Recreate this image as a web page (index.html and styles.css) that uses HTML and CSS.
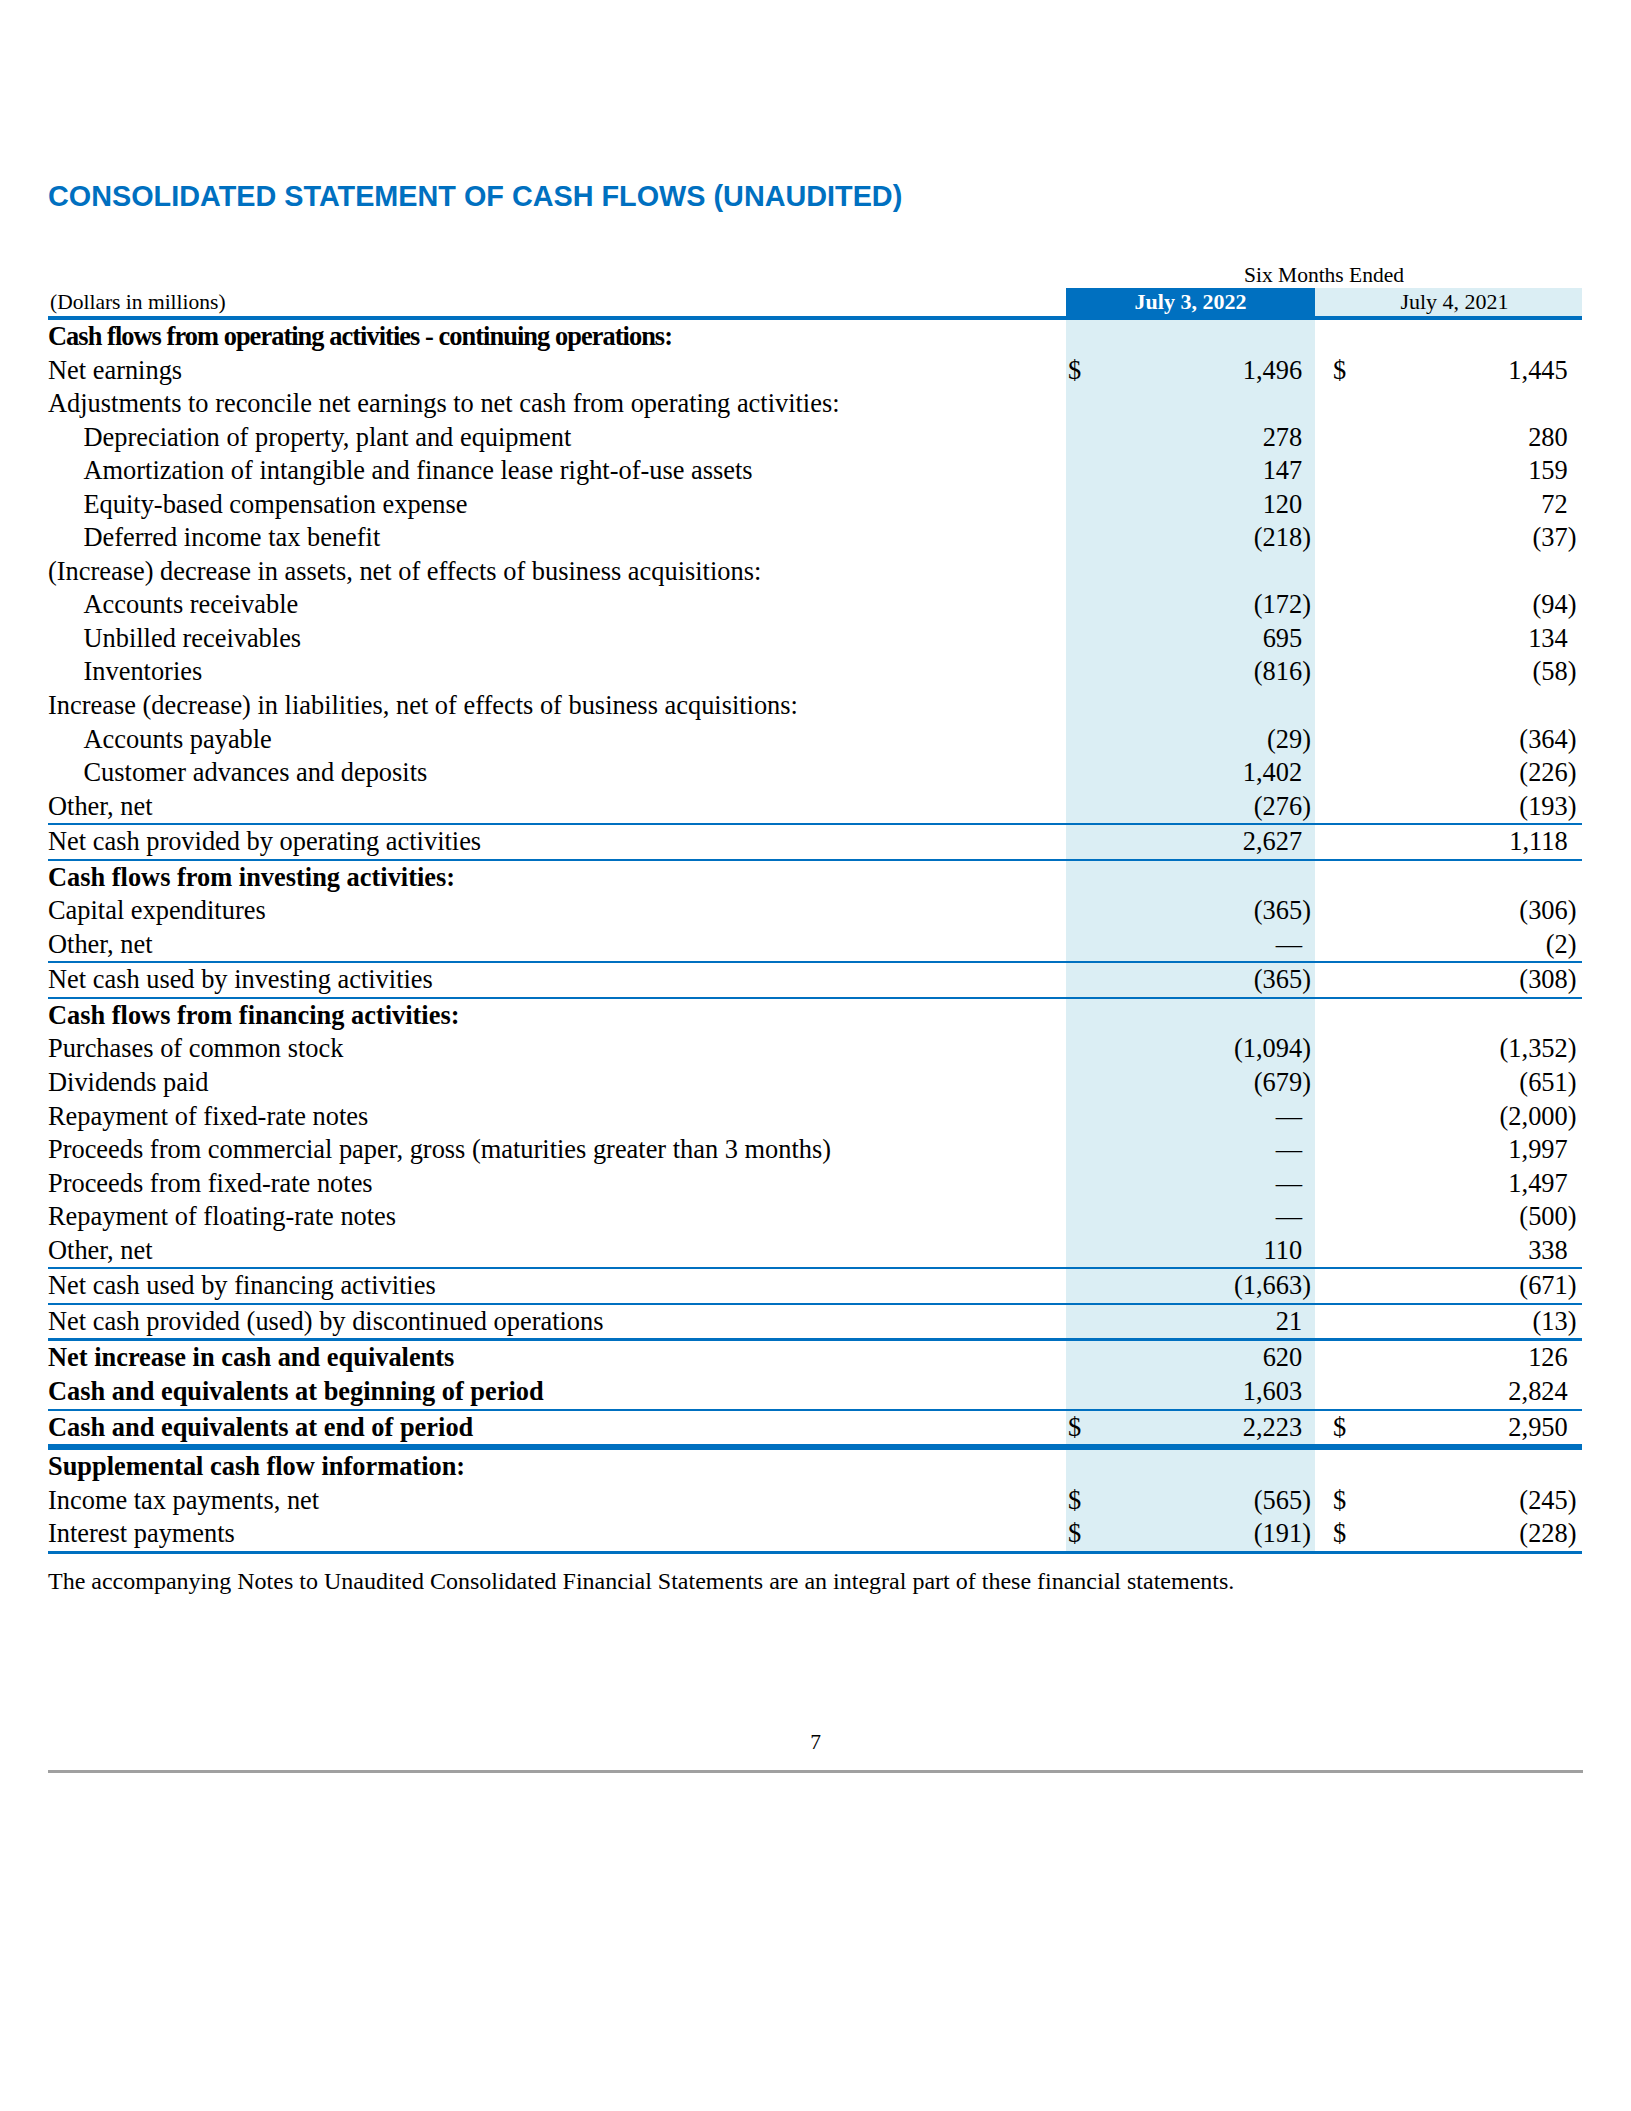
FILE: index.html
```html
<!DOCTYPE html>
<html lang="en">
<head>
<meta charset="utf-8">
<title>Consolidated Statement of Cash Flows (Unaudited)</title>
<link rel="stylesheet" href="styles.css">
</head>
<body>
<div class="page">
  <h1 class="title">CONSOLIDATED STATEMENT OF CASH FLOWS (UNAUDITED)</h1>
  <table class="cf">
    <colgroup><col class="c-label"><col class="c-cur"><col class="c-prior"></colgroup>
    <thead>
      <tr class="super"><th></th><th colspan="2">Six Months Ended</th></tr>
      <tr class="hdr"><th class="units">(Dollars in millions)</th><th class="cur-h">July 3, 2022</th><th class="prior-h">July 4, 2021</th></tr>
    </thead>
    <tbody>
      <tr><td class="lbl b tight">Cash flows from operating activities - continuing operations:</td><td class="cur"></td><td class="prior"></td></tr>
      <tr><td class="lbl">Net earnings</td><td class="cur"><span class="usd">$</span><span class="p">1,496</span></td><td class="prior"><span class="usd">$</span><span class="p">1,445</span></td></tr>
      <tr><td class="lbl">Adjustments to reconcile net earnings to net cash from operating activities:</td><td class="cur"></td><td class="prior"></td></tr>
      <tr><td class="lbl ind">Depreciation of property, plant and equipment</td><td class="cur"><span class="p">278</span></td><td class="prior"><span class="p">280</span></td></tr>
      <tr><td class="lbl ind">Amortization of intangible and finance lease right-of-use assets</td><td class="cur"><span class="p">147</span></td><td class="prior"><span class="p">159</span></td></tr>
      <tr><td class="lbl ind">Equity-based compensation expense</td><td class="cur"><span class="p">120</span></td><td class="prior"><span class="p">72</span></td></tr>
      <tr><td class="lbl ind">Deferred income tax benefit</td><td class="cur">(218)</td><td class="prior">(37)</td></tr>
      <tr><td class="lbl">(Increase) decrease in assets, net of effects of business acquisitions:</td><td class="cur"></td><td class="prior"></td></tr>
      <tr><td class="lbl ind">Accounts receivable</td><td class="cur">(172)</td><td class="prior">(94)</td></tr>
      <tr><td class="lbl ind">Unbilled receivables</td><td class="cur"><span class="p">695</span></td><td class="prior"><span class="p">134</span></td></tr>
      <tr><td class="lbl ind">Inventories</td><td class="cur">(816)</td><td class="prior">(58)</td></tr>
      <tr><td class="lbl">Increase (decrease) in liabilities, net of effects of business acquisitions:</td><td class="cur"></td><td class="prior"></td></tr>
      <tr><td class="lbl ind">Accounts payable</td><td class="cur">(29)</td><td class="prior">(364)</td></tr>
      <tr><td class="lbl ind">Customer advances and deposits</td><td class="cur"><span class="p">1,402</span></td><td class="prior">(226)</td></tr>
      <tr class="r"><td class="lbl">Other, net</td><td class="cur">(276)</td><td class="prior">(193)</td></tr>
      <tr class="r"><td class="lbl">Net cash provided by operating activities</td><td class="cur"><span class="p">2,627</span></td><td class="prior"><span class="p">1,118</span></td></tr>
      <tr><td class="lbl b">Cash flows from investing activities:</td><td class="cur"></td><td class="prior"></td></tr>
      <tr><td class="lbl">Capital expenditures</td><td class="cur">(365)</td><td class="prior">(306)</td></tr>
      <tr class="r"><td class="lbl">Other, net</td><td class="cur"><span class="p">—</span></td><td class="prior">(2)</td></tr>
      <tr class="r"><td class="lbl">Net cash used by investing activities</td><td class="cur">(365)</td><td class="prior">(308)</td></tr>
      <tr><td class="lbl b">Cash flows from financing activities:</td><td class="cur"></td><td class="prior"></td></tr>
      <tr><td class="lbl">Purchases of common stock</td><td class="cur">(1,094)</td><td class="prior">(1,352)</td></tr>
      <tr><td class="lbl">Dividends paid</td><td class="cur">(679)</td><td class="prior">(651)</td></tr>
      <tr><td class="lbl">Repayment of fixed-rate notes</td><td class="cur"><span class="p">—</span></td><td class="prior">(2,000)</td></tr>
      <tr><td class="lbl">Proceeds from commercial paper, gross (maturities greater than 3 months)</td><td class="cur"><span class="p">—</span></td><td class="prior"><span class="p">1,997</span></td></tr>
      <tr><td class="lbl">Proceeds from fixed-rate notes</td><td class="cur"><span class="p">—</span></td><td class="prior"><span class="p">1,497</span></td></tr>
      <tr><td class="lbl">Repayment of floating-rate notes</td><td class="cur"><span class="p">—</span></td><td class="prior">(500)</td></tr>
      <tr class="r"><td class="lbl">Other, net</td><td class="cur"><span class="p">110</span></td><td class="prior"><span class="p">338</span></td></tr>
      <tr class="r"><td class="lbl">Net cash used by financing activities</td><td class="cur">(1,663)</td><td class="prior">(671)</td></tr>
      <tr class="rm"><td class="lbl">Net cash provided (used) by discontinued operations</td><td class="cur"><span class="p">21</span></td><td class="prior">(13)</td></tr>
      <tr><td class="lbl b">Net increase in cash and equivalents</td><td class="cur"><span class="p">620</span></td><td class="prior"><span class="p">126</span></td></tr>
      <tr class="r"><td class="lbl b">Cash and equivalents at beginning of period</td><td class="cur"><span class="p">1,603</span></td><td class="prior"><span class="p">2,824</span></td></tr>
      <tr class="rl"><td class="lbl b">Cash and equivalents at end of period</td><td class="cur"><span class="usd">$</span><span class="p">2,223</span></td><td class="prior"><span class="usd">$</span><span class="p">2,950</span></td></tr>
      <tr><td class="lbl b">Supplemental cash flow information:</td><td class="cur"></td><td class="prior"></td></tr>
      <tr><td class="lbl">Income tax payments, net</td><td class="cur"><span class="usd">$</span>(565)</td><td class="prior"><span class="usd">$</span>(245)</td></tr>
      <tr class="rm"><td class="lbl">Interest payments</td><td class="cur"><span class="usd">$</span>(191)</td><td class="prior"><span class="usd">$</span>(228)</td></tr>
    </tbody>
  </table>
  <p class="note">The accompanying Notes to Unaudited Consolidated Financial Statements are an integral part of these financial statements.</p>
  <div class="folio">7</div>
  <hr class="pagebreak">
</div>
</body>
</html>
```

FILE: styles.css
```css
html, body {
  margin: 0;
  background: #ffffff;
  color: #000000;
}

.page {
  padding: 179px 48px 0 48px;
  font-family: "Liberation Serif", "Times New Roman", serif;
}

.title {
  margin: 0 0 49px 0;
  font-family: "Liberation Sans", Arial, sans-serif;
  font-weight: bold;
  font-size: 28.8px;
  line-height: 34px;
  color: #0070c0;
}

.cf {
  width: 1534px;
  table-layout: fixed;
  border-collapse: separate;
  border-spacing: 0;
  font-size: 26.4px;
  line-height: 33.55px;
}

.c-label { width: 1018px; }
.c-cur { width: 249px; }
.c-prior { width: 267px; }

.cf th,
.cf td {
  padding: 0;
  vertical-align: baseline;
}

.super th {
  font-size: 21.5px;
  line-height: 26px;
  font-weight: normal;
  text-align: center;
}

.hdr th {
  font-size: 22px;
  line-height: 28px;
  border-bottom: 4px solid #0070c0;
}

.hdr .units {
  text-align: left;
  font-weight: normal;
  font-size: 21.5px;
  padding-left: 2px;
}

.hdr .cur-h {
  background: #0070c0;
  color: #ffffff;
  font-weight: bold;
  text-align: center;
}

.hdr .prior-h {
  background: #dbeef4;
  font-weight: normal;
  text-align: center;
  padding-left: 12px;
}

.lbl {
  padding-left: 2.5px;
  white-space: nowrap;
}

.cf td.ind {
  padding-left: 35.5px;
}

.b {
  font-weight: bold;
}

.tight {
  letter-spacing: -0.95px;
}

.cf td.cur {
  background: #dbeef4;
  text-align: right;
  padding: 0 4px 0 2px;
  white-space: nowrap;
}

.cf td.prior {
  text-align: right;
  padding: 0 5.5px 0 18px;
  white-space: nowrap;
}

.usd {
  float: left;
}

.p {
  padding-right: 0.333em;
}

.r td { border-bottom: 2px solid #0070c0; }
.rm td { border-bottom: 3px solid #0070c0; }
.rl td { border-bottom: 6px solid #0070c0; }

.note {
  margin: 13.5px 0 0 0;
  font-size: 24px;
  line-height: 28px;
}

.folio {
  margin-top: 134px;
  text-align: center;
  font-size: 21.5px;
  line-height: 26px;
}

.pagebreak {
  margin: 15px 0 0 0;
  border: 0;
  height: 3px;
  background: #a0a0a0;
}
```
